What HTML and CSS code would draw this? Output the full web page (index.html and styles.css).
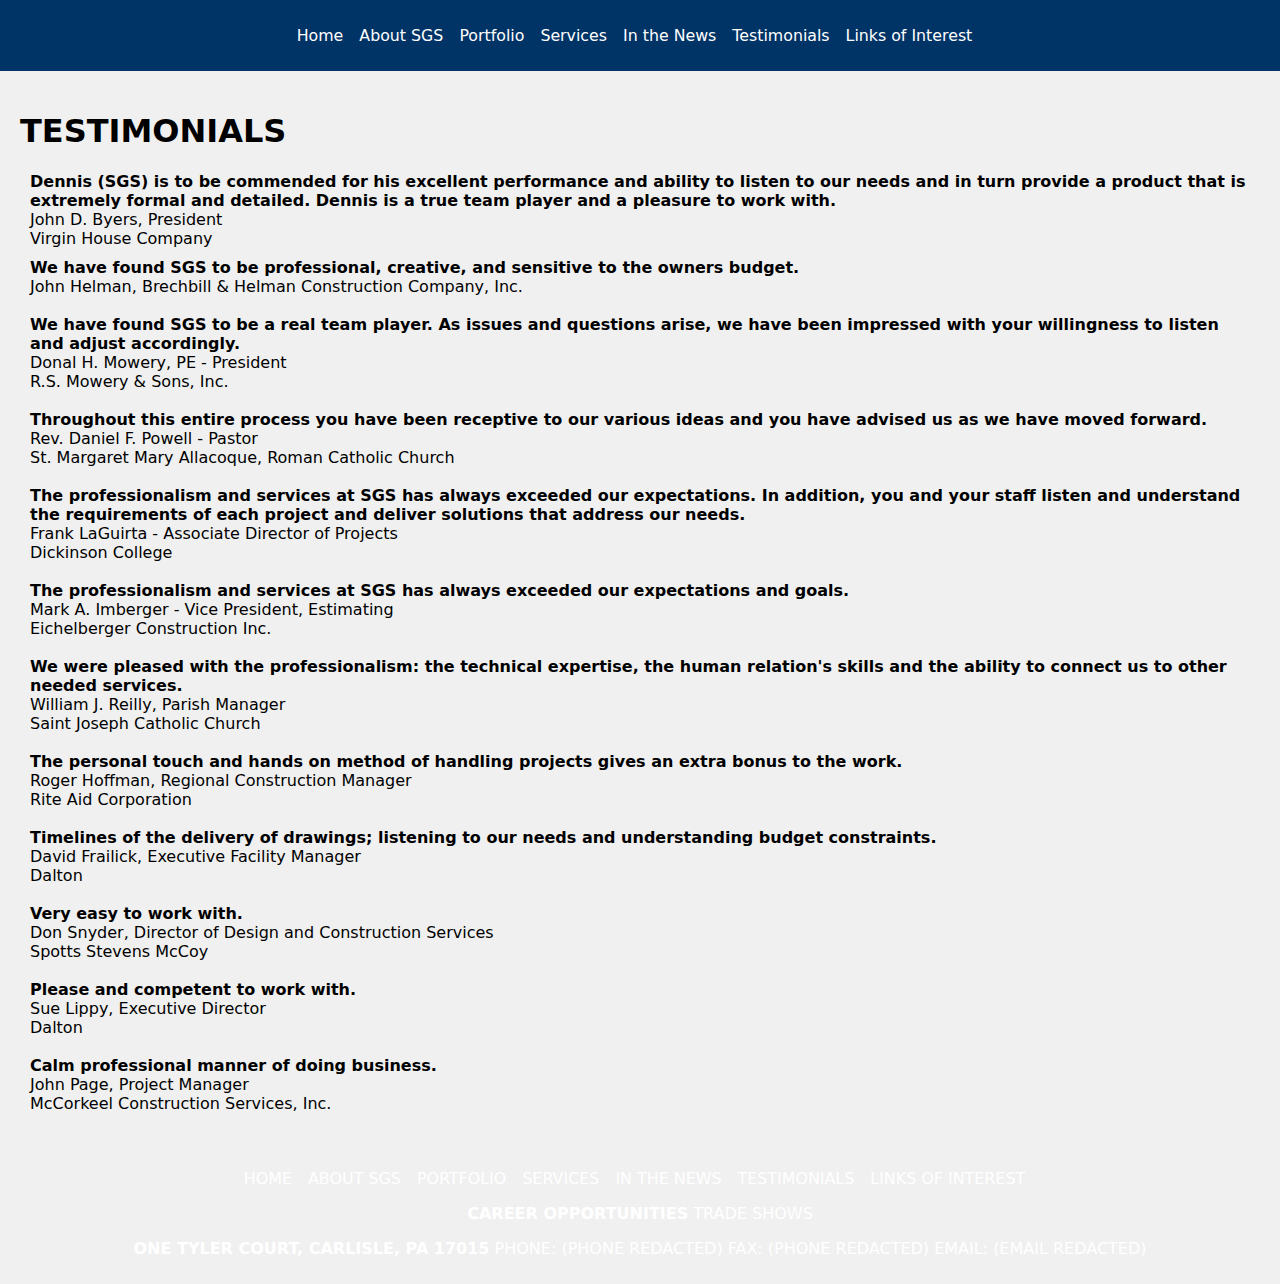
FILE: index.html
```html
<!DOCTYPE html>
<html lang="en">
<head>
<meta charset="utf-8">
<title>Testimonials</title>
<link rel="stylesheet" href="styles.css">
</head>
<body>
<header class="topbar">
  <nav class="nav">
    <a href="#">Home</a>
    <a href="#">About SGS</a>
    <a href="#">Portfolio</a>
    <a href="#">Services</a>
    <a href="#">In the News</a>
    <a href="#">Testimonials</a>
    <a href="#">Links of Interest</a>
  </nav>
</header>
<main class="main">
  <h1 class="title">TESTIMONIALS</h1>
  <div class="list">
    <div class="item item-first">
      <div class="quote">Dennis (SGS) is to be commended for his excellent performance and ability to listen to our needs and in turn provide a product that is extremely formal and detailed. Dennis is a true team player and a pleasure to work with.</div>
      <div>John D. Byers, President</div>
      <div>Virgin House Company</div>
    </div>
    <div class="item">
      <div class="quote">We have found SGS to be professional, creative, and sensitive to the owners budget.</div>
      <div>John Helman, Brechbill &amp; Helman Construction Company, Inc.</div>
    </div>
    <div class="item">
      <div class="quote">We have found SGS to be a real team player. As issues and questions arise, we have been impressed with your willingness to listen and adjust accordingly.</div>
      <div>Donal H. Mowery, PE - President</div>
      <div>R.S. Mowery &amp; Sons, Inc.</div>
    </div>
    <div class="item">
      <div class="quote">Throughout this entire process you have been receptive to our various ideas and you have advised us as we have moved forward.</div>
      <div>Rev. Daniel F. Powell - Pastor</div>
      <div>St. Margaret Mary Allacoque, Roman Catholic Church</div>
    </div>
    <div class="item">
      <div class="quote">The professionalism and services at SGS has always exceeded our expectations. In addition, you and your staff listen and understand the requirements of each project and deliver solutions that address our needs.</div>
      <div>Frank LaGuirta - Associate Director of Projects</div>
      <div>Dickinson College</div>
    </div>
    <div class="item">
      <div class="quote">The professionalism and services at SGS has always exceeded our expectations and goals.</div>
      <div>Mark A. Imberger - Vice President, Estimating</div>
      <div>Eichelberger Construction Inc.</div>
    </div>
    <div class="item">
      <div class="quote">We were pleased with the professionalism: the technical expertise, the human relation's skills and the ability to connect us to other needed services.</div>
      <div>William J. Reilly, Parish Manager</div>
      <div>Saint Joseph Catholic Church</div>
    </div>
    <div class="item">
      <div class="quote">The personal touch and hands on method of handling projects gives an extra bonus to the work.</div>
      <div>Roger Hoffman, Regional Construction Manager</div>
      <div>Rite Aid Corporation</div>
    </div>
    <div class="item">
      <div class="quote">Timelines of the delivery of drawings; listening to our needs and understanding budget constraints.</div>
      <div>David Frailick, Executive Facility Manager</div>
      <div>Dalton</div>
    </div>
    <div class="item">
      <div class="quote">Very easy to work with.</div>
      <div>Don Snyder, Director of Design and Construction Services</div>
      <div>Spotts Stevens McCoy</div>
    </div>
    <div class="item">
      <div class="quote">Please and competent to work with.</div>
      <div>Sue Lippy, Executive Director</div>
      <div>Dalton</div>
    </div>
    <div class="item">
      <div class="quote">Calm professional manner of doing business.</div>
      <div>John Page, Project Manager</div>
      <div>McCorkeel Construction Services, Inc.</div>
    </div>
  </div>
</main>
<footer class="footer">
  <nav class="footnav">
    <a href="#">HOME</a>
    <a href="#">ABOUT SGS</a>
    <a href="#">PORTFOLIO</a>
    <a href="#">SERVICES</a>
    <a href="#">IN THE NEWS</a>
    <a href="#">TESTIMONIALS</a>
    <a href="#">LINKS OF INTEREST</a>
  </nav>
  <div class="footline"><strong>CAREER OPPORTUNITIES</strong> TRADE SHOWS</div>
  <div class="footline"><strong>ONE TYLER COURT, CARLISLE, PA 17015</strong> PHONE: (PHONE REDACTED) FAX: (PHONE REDACTED) EMAIL: (EMAIL REDACTED)</div>
</footer>
</body>
</html>
```
FILE: styles.css
```css
html, body {
  margin: 0;
  padding: 0;
}
body {
  background: #f0f0f0;
  color: #000;
  font-family: "DejaVu Sans", sans-serif;
  font-size: 16px;
  line-height: 19px;
}
a {
  color: inherit;
  text-decoration: none;
}
.topbar {
  background: #003366;
  height: 71px;
  box-sizing: border-box;
  padding-top: 26px;
}
.nav {
  display: flex;
  justify-content: center;
  gap: 16px;
  padding-right: 11px;
  color: #fff;
  font-size: 15.8px;
}
.main {
  padding: 42px 30px 0 20px;
}
.title {
  margin: 0;
  font-size: 32px;
  line-height: 37px;
  font-weight: bold;
}
.list {
  padding-left: 10px;
  padding-top: 22px;
}
.item {
  margin-bottom: 19px;
}
.item-first {
  margin-bottom: 10px;
}
.item:last-child {
  margin-bottom: 0;
}
.quote {
  font-weight: bold;
}
.footer {
  margin-top: 56px;
  padding-bottom: 26px;
  color: #fff;
  text-align: center;
  display: flex;
  flex-direction: column;
  gap: 16px;
}
.footnav {
  display: flex;
  justify-content: center;
  gap: 16px;
  padding-right: 11px;
  font-size: 15.9px;
}
.footline strong {
  font-weight: bold;
}
```
